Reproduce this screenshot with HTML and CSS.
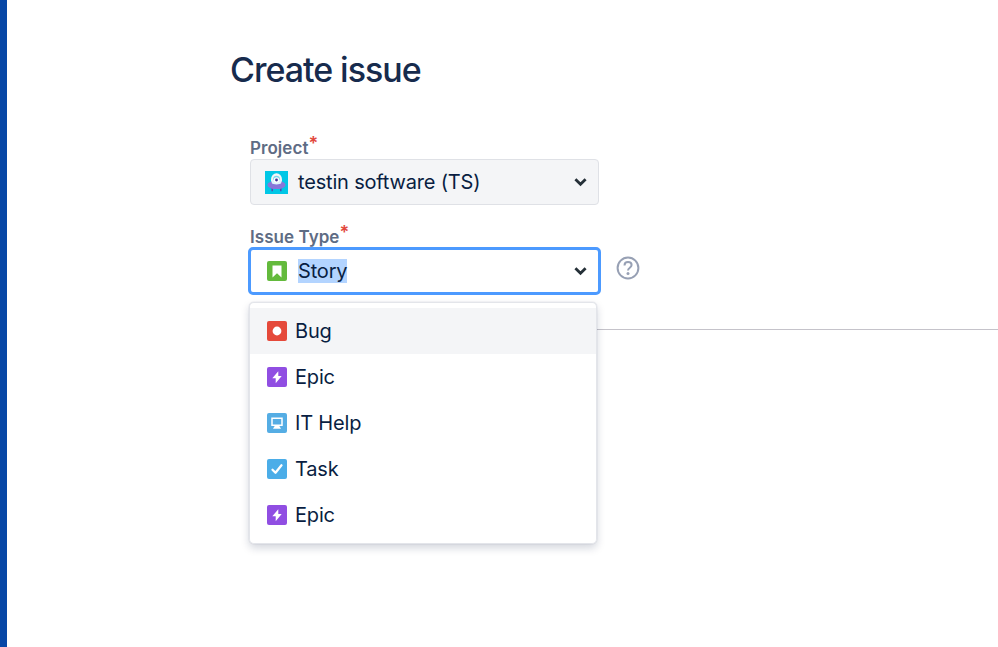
FILE: index.html
```html
<!DOCTYPE html>
<html lang="en">
<head>
    <meta charset="UTF-8">
    <meta name="viewport" content="width=device-width, initial-scale=1.0">
    <title>Create issue</title>
    <link rel="stylesheet" href="styles.css">
</head>
<body>
    <div class="sidebar"></div>

    <main class="content">
        <h1>Create issue</h1>
        <form class="issue-form">
            <div class="label">Project<span class="required">*</span></div>
            <div class="select project-select">
                <svg class="avatar" viewBox="0 0 24 24">
                    <rect width="24" height="24" fill="#00c7e6"/>
                    <path d="M7.500 17v4M16.500 17v4" stroke="#5243aa" stroke-width="1.400"/>
                    <path d="M6.300 13.500V8.500a5.700 6.200 0 0 1 11.400 0v5z" fill="#f4f5f7"/>
                    <path d="M8.300 14V9a3.700 4 0 0 1 7.400 0v5z" fill="#79d9ec"/>
                    <ellipse cx="12" cy="14.600" rx="9.500" ry="4.300" fill="#8777d9"/>
                    <path d="M7 9h10v3.500c-1.500 2-8.500 2-10 0z" fill="#dff5fa"/>
                    <circle cx="12" cy="9.400" r="2.900" fill="#fff"/>
                    <circle cx="12" cy="9.400" r="1.500" fill="#403294"/>
                </svg>
                <span class="value">testin software (TS)</span>
                <svg class="chevron" viewBox="0 0 12 9"><path d="M1.300 1.900 6 6.500l4.700-4.600"/></svg>
            </div>

            <div class="label type-label">Issue Type<span class="required">*</span></div>
            <div class="type-row">
                <div class="select type-select">
                    <svg class="icon" viewBox="0 0 20 20">
                        <rect width="20" height="20" rx="2" fill="#63ba3c"/>
                        <path d="M5.500 4.500h9v12L10 12.200l-4.500 4.300z" fill="#fff"/>
                    </svg>
                    <span class="value"><mark>Story</mark></span>
                    <svg class="chevron" viewBox="0 0 12 9"><path d="M1.300 1.900 6 6.500l4.700-4.600"/></svg>

                    <ul class="menu">
                        <li class="active">
                            <svg class="icon" viewBox="0 0 20 20">
                                <rect width="20" height="20" rx="2" fill="#e5493a"/>
                                <circle cx="10" cy="10" r="4.400" fill="#fff"/>
                            </svg>
                            Bug
                        </li>
                        <li>
                            <svg class="icon" viewBox="0 0 20 20">
                                <rect width="20" height="20" rx="2" fill="#904ee2"/>
                                <path d="M11.300 4.200 5.300 11.200h3.400v5l6-7.200h-3.400z" fill="#fff"/>
                            </svg>
                            Epic
                        </li>
                        <li>
                            <svg class="icon" viewBox="0 0 20 20">
                                <rect width="20" height="20" rx="2" fill="#55ade4"/>
                                <path d="M5 5.300h10v7H5z" fill="none" stroke="#fff" stroke-width="1.500"/>
                                <path d="M8 12.500h4l2 3.300H6z" fill="#fff"/>
                            </svg>
                            IT Help
                        </li>
                        <li>
                            <svg class="icon" viewBox="0 0 20 20">
                                <rect width="20" height="20" rx="2" fill="#4bade8"/>
                                <path d="m5.500 10.700 3 3 6-7.400" fill="none" stroke="#fff" stroke-width="2.300" stroke-linecap="round" stroke-linejoin="round"/>
                            </svg>
                            Task
                        </li>
                        <li>
                            <svg class="icon" viewBox="0 0 20 20">
                                <rect width="20" height="20" rx="2" fill="#904ee2"/>
                                <path d="M11.300 4.200 5.300 11.200h3.400v5l6-7.200h-3.400z" fill="#fff"/>
                            </svg>
                            Epic
                        </li>
                    </ul>
                </div>
                <svg class="help" viewBox="0 0 24 24">
                    <circle cx="12" cy="12" r="10.400"/>
                    <path d="M8.500 9.400c0-4.600 7.100-4.300 7.100-.3 0 2.700-3.600 2.500-3.600 5.300"/>
                    <circle class="dot" cx="12" cy="17.500" r="1.500"/>
                </svg>
            </div>
        </form>
        <hr>
    </main>
</body>
</html>
```

FILE: styles.css
```css
* {
    box-sizing: border-box;
}
body {
    margin: 0;
    display: flex;
    height: 647px;
    overflow: hidden;
    background-color: #fff;
    color: #091e42;
    font-family: Inter, "Liberation Sans", sans-serif;
}
.sidebar {
    width: 7px;
    flex-shrink: 0;
    background-color: #0747a6;
}
.content {
    flex: 1;
    padding: 50px 0 0 223px;
}
h1 {
    margin: 0;
    color: #172b4d;
    font-size: 34px;
    font-weight: 500;
    line-height: 40px;
    letter-spacing: -1.03px;
}
.issue-form {
    padding: 45px 0 0 18px;
}
.label {
    height: 24px;
    padding-left: 2px;
    color: #5e6c84;
    font-size: 17px;
    font-weight: 600;
    line-height: 27px;
    letter-spacing: 0.05px;
    white-space: nowrap;
}
.required {
    color: #e2483d;
    font-size: 18px;
    font-weight: 600;
    vertical-align: 4px;
    line-height: 0;
}
.select {
    display: flex;
    align-items: center;
    font-size: 20px;
    letter-spacing: -0.18px;
}
.project-select {
    width: 349px;
    height: 46px;
    margin-left: 2px;
    padding: 0 11px 0 14px;
    border: 1px solid #dfe1e6;
    border-radius: 4px;
    background-color: #f4f5f7;
}
.avatar {
    width: 23px;
    height: 23px;
    margin-right: 10px;
}
.value {
    flex: 1;
}
.chevron {
    width: 13px;
    height: 10px;
    fill: none;
    stroke: #253038;
    stroke-width: 2.600;
}
.type-label {
    margin-top: 18px;
    line-height: 28px;
}
.type-row {
    display: flex;
    gap: 15px;
}
.type-select {
    position: relative;
    width: 353px;
    height: 48px;
    padding: 0 11px 0 16px;
    border: 3px solid #4c9aff;
    border-radius: 5px;
    background-color: #fff;
}
.icon {
    width: 20px;
    height: 20px;
    flex-shrink: 0;
}
.type-select .value {
    margin-left: 11px;
}
mark {
    background-color: #b3d4ff;
    color: inherit;
}
.menu {
    position: absolute;
    top: 52px;
    left: -2px;
    width: 348px;
    height: 242px;
    margin: 0;
    padding: 6px 1px;
    list-style: none;
    border-radius: 5px;
    background-color: #fff;
    box-shadow: inset 0 0 0 1px #e3e5ea, 0 4px 8px rgba(9, 30, 66, 0.18), 0 0 1px rgba(9, 30, 66, 0.31);
}
.menu li {
    display: flex;
    align-items: center;
    gap: 8px;
    height: 46px;
    padding-left: 17px;
}
.menu .active {
    background-color: #f4f5f7;
}
.help {
    width: 24px;
    height: 24px;
    margin-top: 9px;
    fill: none;
    stroke: #97a0b4;
    stroke-width: 2;
}
.help .dot {
    fill: #97a0b4;
    stroke: none;
}
hr {
    margin: 34px 0 0 19px;
    border: 0;
    border-top: 1px solid #c5c3ca;
}
```
